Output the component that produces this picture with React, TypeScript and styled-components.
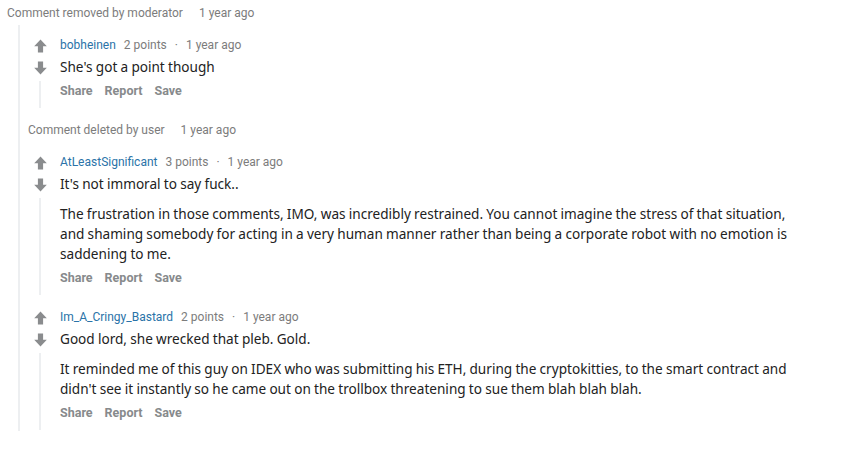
import React from "react";
import styled, { createGlobalStyle } from "styled-components";

const Global = createGlobalStyle`
  html, body { margin: 0; padding: 0; background: #ffffff; }
  body { font-family: "Noto Sans", "Open Sans", Arial, sans-serif; }
`;

const metaFont = `Roboto, "Noto Sans", Arial, sans-serif`;

const Root = styled.div`
  padding: 4px 0 0 7px;
  width: 846px;
  box-sizing: border-box;
`;

const DeletedMeta = styled.div<{ $indent?: number }>`
  display: flex;
  gap: 16px;
  font-family: ${metaFont};
  font-size: 12px;
  line-height: 18px;
  color: #7c7c7c;
  margin-left: ${(p) => p.$indent ?? 0}px;
`;

const Children = styled.div`
  margin-left: 11px;
  margin-top: 3px;
  border-left: 2px solid #edeff1;
  padding-left: 8px;
  padding-top: 11px;
  padding-bottom: 0;
  display: flex;
  flex-direction: column;
`;

const CommentRow = styled.div<{ $gapTop?: number; $padBottom?: number }>`
  display: flex;
  gap: 8px;
  margin-top: ${(p) => p.$gapTop ?? 0}px;
  padding-bottom: ${(p) => p.$padBottom ?? 8}px;
`;

const VoteCol = styled.div`
  width: 24px;
  flex: none;
  display: flex;
  flex-direction: column;
  align-items: center;
  padding-top: 3px;
`;

const ArrowBtn = styled.svg<{ $down?: boolean }>`
  width: 13px;
  height: 14px;
  display: block;
  transform: ${(p) => (p.$down ? "rotate(180deg)" : "none")};
  margin-bottom: ${(p) => (p.$down ? 0 : 8)}px;
`;

const ThreadLine = styled.div`
  flex: 1;
  width: 2px;
  background: #edeff1;
  margin-top: 6px;
  margin-bottom: -8px;
`;

const Body = styled.div`
  flex: 1;
  min-width: 0;
  max-width: 735px;
`;

const Meta = styled.div`
  display: flex;
  align-items: center;
  font-family: ${metaFont};
  font-size: 12px;
  line-height: 18px;
  color: #7c7c7c;
`;

const Author = styled.span`
  color: #2a73a8;
  margin-right: 8px;
`;

const Dot = styled.span`
  margin: 0 8px;
`;

const Para = styled.p<{ $first?: boolean }>`
  margin: ${(p) => (p.$first ? 3 : 10)}px 0 0;
  font-size: 13.6px;
  word-spacing: -0.3px;
  line-height: 20px;
  color: #222222;
`;

const Actions = styled.div`
  display: flex;
  gap: 12px;
  margin-top: 5px;
  font-family: ${metaFont};
  font-size: 12.5px;
  line-height: 18px;
  font-weight: 700;
  color: #878a8c;
`;

const Arrow = ({ down }: { down?: boolean }) => (
  <ArrowBtn $down={down} viewBox="0 0 13 14">
    <path d="M6.5 0.5 L12.8 7.3 H9.1 V13.5 H3.9 V7.3 H0.2 Z" fill="#8a8c8e" />
  </ArrowBtn>
);

type C = {
  author: string;
  points: string;
  paras: string[];
  gapTop?: number;
  padBottom?: number;
};

const Comment = ({ author, points, paras, gapTop, padBottom }: C) => (
  <CommentRow $gapTop={gapTop} $padBottom={padBottom}>
    <VoteCol>
      <Arrow />
      <Arrow down />
      <ThreadLine />
    </VoteCol>
    <Body>
      <Meta>
        <Author>{author}</Author>
        <span>{points}</span>
        <Dot>·</Dot>
        <span>1 year ago</span>
      </Meta>
      {paras.map((t, i) => (
        <Para key={i} $first={i === 0}>
          {t}
        </Para>
      ))}
      <Actions>
        <span>Share</span>
        <span>Report</span>
        <span>Save</span>
      </Actions>
    </Body>
  </CommentRow>
);

export default function App() {
  return (
    <Root>
      <Global />
      <DeletedMeta>
        <span>Comment removed by moderator</span>
        <span>1 year ago</span>
      </DeletedMeta>
      <Children>
        <Comment
          author="bobheinen"
          points="2 points"
          paras={["She's got a point though"]}
          padBottom={6}
        />
        <DeletedMeta style={{ marginTop: 15 }}>
          <span>Comment deleted by user</span>
          <span>1 year ago</span>
        </DeletedMeta>
        <Comment
          gapTop={14}
          author="AtLeastSignificant"
          points="3 points"
          paras={[
            "It's not immoral to say fuck..",
            "The frustration in those comments, IMO, was incredibly restrained. You cannot imagine the stress of that situation, and shaming somebody for acting in a very human manner rather than being a corporate robot with no emotion is saddening to me.",
          ]}
          padBottom={9}
        />
        <Comment
          gapTop={12}
          author="Im_A_Cringy_Bastard"
          points="2 points"
          paras={[
            "Good lord, she wrecked that pleb. Gold.",
            "It reminded me of this guy on IDEX who was submitting his ETH, during the cryptokitties, to the smart contract and didn't see it instantly so he came out on the trollbox threatening to sue them blah blah blah.",
          ]}
          padBottom={9}
        />
      </Children>
    </Root>
  );
}
